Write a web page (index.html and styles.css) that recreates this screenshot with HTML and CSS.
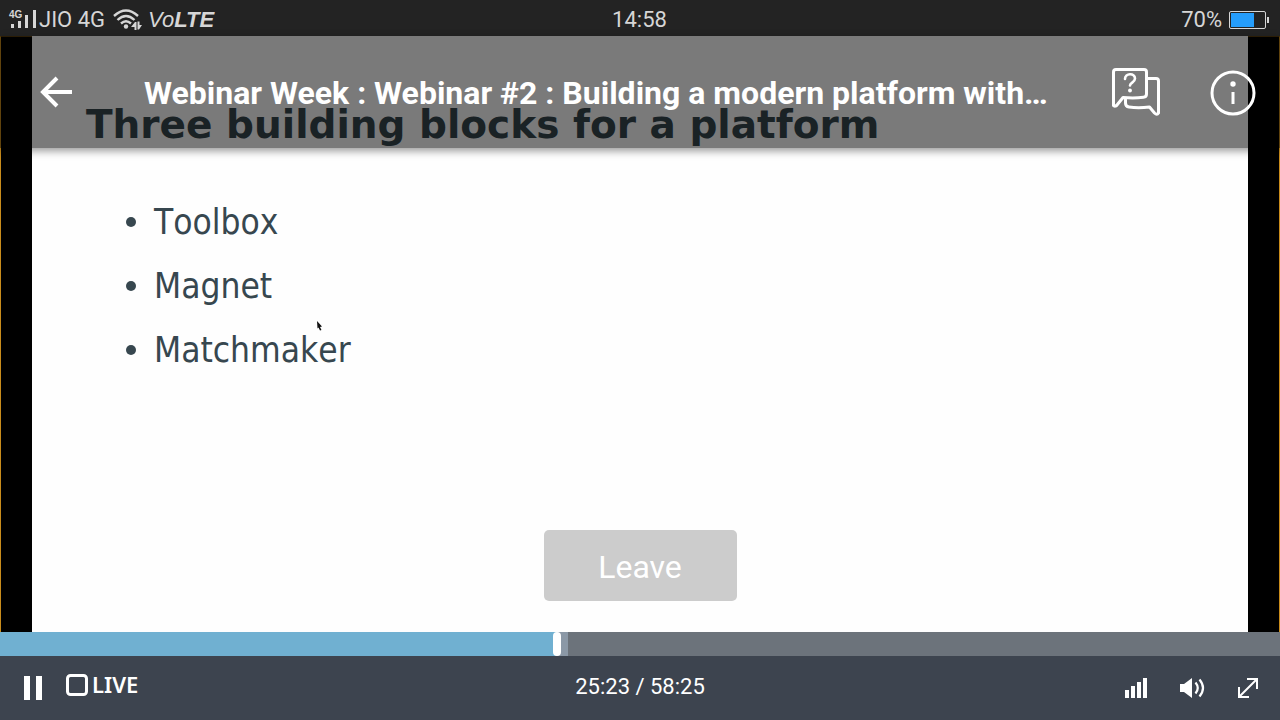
FILE: index.html
```html
<!DOCTYPE html>
<html lang="en">
<head>
<meta charset="utf-8">
<meta name="viewport" content="width=device-width, initial-scale=1">
<title>Webinar Week</title>
<link rel="stylesheet" href="styles.css">
</head>
<body>
<div class="status">
  <div class="status-left">
    <svg class="cell" viewBox="0 0 28 20" width="28" height="20" aria-hidden="true">
      <path d="M3 14h3v4H3zM10 11h3v7h-3zM17 5h3v13h-3zM25 0h3v18h-3z" fill="currentColor"/>
      <text class="cell-tag" x="1" y="8">4G</text>
    </svg>
    <span class="carrier">JIO 4G</span>
    <svg class="wifi" viewBox="0 0 30 22" width="30" height="22" fill="none" stroke="currentColor" stroke-width="2.400" aria-hidden="true">
      <path d="M1 7Q13-4 25 7M4.500 11Q13 3 21.500 11M8 14.500Q13 10 18 14.500"/>
      <circle cx="13" cy="17.500" r="2.200" fill="currentColor" stroke="none"/>
      <path d="M23.500 21v-8h-1.500l-4 5h3.500v3zM24.500 12.500v8H26l3-4.500h-2.500v-3.500z" fill="currentColor" stroke="none"/>
    </svg>
    <span class="volte">Vo<b>LTE</b></span>
  </div>
  <time class="clock">14:58</time>
  <div class="status-right">
    <span>70%</span>
    <svg viewBox="0 0 40 18" width="40" height="18" aria-hidden="true">
      <rect x="0.500" y="0.500" width="36" height="17" rx="1.500" fill="none" stroke="currentColor"/>
      <rect x="2" y="2" width="23" height="14" fill="#259dfb"/>
      <rect x="38" y="6" width="2" height="6" fill="currentColor"/>
    </svg>
  </div>
</div>

<main class="stage">
  <section class="slide">
    <h2 class="slide-title">Three building blocks for a platform</h2>
    <ul class="points">
      <li>Toolbox</li>
      <li>Magnet</li>
      <li>Matchmaker</li>
    </ul>
    <svg class="pointer" viewBox="0 0 6 10" width="6" height="10" aria-hidden="true"><path d="M0 0l5 5.500-2 .5 1.500 3-1.500.5-1.500-3L.5 7.500z" fill="#111"/></svg>
  </section>
  <header class="appbar">
    <button class="icon-btn" type="button" aria-label="Back">
      <svg viewBox="0 0 32 32" width="32" height="32" fill="none" stroke="#fff" stroke-width="4" aria-hidden="true"><path d="M32 16H4M17 2L3 16l14 14"/></svg>
    </button>
    <h1 class="title">Webinar Week : Webinar #2 : Building a modern platform with…</h1>
    <div class="actions">
      <button class="icon-btn" type="button" aria-label="Questions">
        <svg viewBox="0 0 48 48" width="48" height="48" fill="none" stroke="#fff" stroke-width="3" stroke-linejoin="round" stroke-linecap="round" aria-hidden="true">
          <path d="M4 1.500h28q2.500 0 2.500 2.500v22q0 3-3 3.300Q22 30.500 11 29.500L5 37q-1.500 2-3.500.5V4q0-2.500 2.500-2.500z"/>
          <path d="M36 10.500h8q2.500 0 2.500 2.500v32q-1.500 2.500-4 0L37.500 39Q26 40.500 17 39q-3.500-.5-3.500-4v-3.500"/>
          <path d="M13 11c0-6 10-6.500 10-.5 0 4-5 4-5 7" stroke-width="2.600"/>
          <circle cx="18" cy="22.500" r="1.200" fill="#fff" stroke-width="1.500"/>
        </svg>
      </button>
      <button class="icon-btn" type="button" aria-label="Information">
        <svg viewBox="0 0 46 46" width="46" height="46" aria-hidden="true">
          <circle cx="23" cy="23" r="21" fill="none" stroke="#fff" stroke-width="3"/>
          <circle cx="23" cy="14" r="2.700" fill="#fff"/>
          <path d="M21.500 22h3v12h-3z" fill="#fff"/>
        </svg>
      </button>
    </div>
  </header>
  <button class="leave" type="button">Leave</button>
</main>

<footer class="player">
  <input class="seek" type="range" min="0" max="3505" value="1523" aria-label="Seek">
  <div class="controls">
    <div class="group">
      <button class="icon-btn" type="button" aria-label="Pause">
        <svg viewBox="0 0 18 24" width="18" height="24" aria-hidden="true"><path d="M0 0h6v24H0zM12 0h6v24h-6z" fill="#fff"/></svg>
      </button>
      <button class="icon-btn live" type="button">
        <svg viewBox="0 0 22 22" width="22" height="22" aria-hidden="true"><rect x="1.500" y="1.500" width="19" height="19" rx="3" fill="none" stroke="#fff" stroke-width="3"/></svg>
        <span>LIVE</span>
      </button>
    </div>
    <span class="time">25:23 / 58:25</span>
    <div class="group tools">
      <button class="icon-btn" type="button" aria-label="Quality">
        <svg viewBox="0 0 22 20" width="22" height="20" aria-hidden="true"><path d="M0 12h4v8H0zM6 8h4v12H6zM12 4h4v16h-4zM18 0h4v20h-4z" fill="#fff"/></svg>
      </button>
      <button class="icon-btn" type="button" aria-label="Volume">
        <svg viewBox="0 0 25 20" width="25" height="20" aria-hidden="true"><path d="M0 6h4l8-6v20l-8-6H0z" fill="#fff"/><path d="M15.500 4.500Q20 10 15.500 15.500M19.500 1.500Q26.500 10 19.500 18.500" fill="none" stroke="#fff" stroke-width="2.200"/></svg>
      </button>
      <button class="icon-btn" type="button" aria-label="Full screen">
        <svg viewBox="0 0 20 20" width="20" height="20" fill="none" stroke="#fff" stroke-width="2" aria-hidden="true"><path d="M9 1h10v10M1 9v10h10M19 1L1 19"/></svg>
      </button>
    </div>
  </div>
</footer>
</body>
</html>
```
FILE: styles.css
```css
* {
  box-sizing: border-box;
}

body {
  margin: 0;
  min-height: 100vh;
  display: flex;
  flex-direction: column;
  background: #000;
  color: #fff;
  font-family: Roboto, "Liberation Sans", sans-serif;
}

h1,
h2,
ul {
  margin: 0;
  padding: 0;
}

svg {
  display: block;
  flex: none;
}

.status {
  display: grid;
  grid-template-columns: 1fr auto 1fr;
  align-items: center;
  height: 36px;
  padding: 0 11px 0 8px;
  background: #232323;
  color: #d6d6d6;
  font-size: 22px;
  line-height: 40px;
}

.status-left,
.status-right {
  display: flex;
  align-items: center;
}

.status-right {
  justify-content: flex-end;
  gap: 7px;
  line-height: 36px;
}

.clock {
  padding-left: 2px;
}

.cell {
  overflow: visible;
}

.cell-tag {
  font: bold 10px "Liberation Sans", sans-serif;
  fill: currentColor;
}

.carrier {
  padding: 0 8px 0 3px;
}

.volte {
  padding-left: 5px;
  font: italic 22px/38px "Liberation Sans", sans-serif;
}

.stage {
  flex: 1;
  display: grid;
  border: 1px solid #c98c1c;
  border-bottom: 0;
  border-top-color: #5a3e0c;
}

.slide,
.appbar,
.leave {
  grid-area: 1 / 1;
}

.slide {
  position: relative;
  margin: -1px 31px 0;
  padding: 64px 56px 0 54px;
  background: #fefefe;
  color: #37474f;
}

.slide-title {
  font: bold 39px/50px "DejaVu Sans", sans-serif;
  white-space: nowrap;
}

.points {
  padding: 40px 0 0 68px;
  font: 35px/64px "DejaVu Sans Condensed", "Noto Sans", sans-serif;
  font-kerning: none;
}

.points li {
  list-style: none;
  position: relative;
}

.points li::before {
  content: "";
  position: absolute;
  left: -28px;
  top: 27px;
  width: 10px;
  height: 10px;
  border-radius: 50%;
  background: currentColor;
}

.pointer {
  position: absolute;
  left: 285px;
  top: 285px;
}

.appbar {
  z-index: 1;
  align-self: start;
  display: flex;
  align-items: center;
  height: 112px;
  margin: -1px -1px 0;
  padding: 0 24px 0 40px;
  background: rgba(0, 0, 0, 0.52);
  box-shadow: 0 3px 8px rgba(0, 0, 0, 0.4);
}

.title {
  flex: 1;
  min-width: 0;
  padding: 2px 0 0 72px;
  overflow: hidden;
  font-size: 32px;
  line-height: 40px;
  font-weight: 700;
  white-space: nowrap;
}

.actions {
  display: flex;
  align-items: flex-end;
  gap: 50px;
}

.icon-btn {
  display: flex;
  align-items: center;
  padding: 0;
  border: 0;
  background: none;
  color: #fff;
}

.leave {
  place-self: end center;
  width: 193px;
  height: 71px;
  margin-bottom: 31px;
  padding: 2px 0 0;
  border: 0;
  border-radius: 5px;
  z-index: 1;
  background: #ccc;
  color: #fff;
  font: 32px/40px Roboto, sans-serif;
}

.player {
  background: #3d444f;
}

.seek {
  appearance: none;
  display: block;
  width: 100%;
  height: 24px;
  margin: 0;
  background: linear-gradient(to right, #70b0d1 43.5%, #8b98a6 43.5% 44.4%, #6c737b 44.4%);
}

.seek::-webkit-slider-thumb {
  appearance: none;
  width: 8px;
  height: 24px;
  border-radius: 4px;
  background: #fff;
}

.controls {
  display: grid;
  grid-template-columns: 1fr auto 1fr;
  align-items: center;
  height: 64px;
  padding: 0 22px 0 24px;
}

.group {
  display: flex;
  align-items: center;
  gap: 24px;
}

.live {
  gap: 4px;
  padding-bottom: 6px;
  font: 600 22px/24px "Noto Sans", sans-serif;
}

.live span {
  padding-bottom: 3px;
}

.time {
  font-size: 22px;
  line-height: 28px;
  padding: 0 2px 2px 0;
}

.tools {
  justify-content: flex-end;
  gap: 33px;
}
```
